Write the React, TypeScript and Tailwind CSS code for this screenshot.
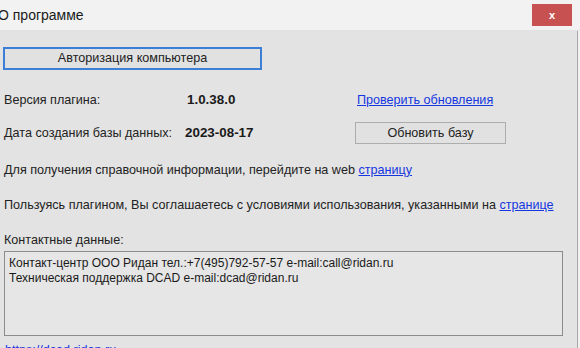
import React from "react";

export default function App() {
  const font = { fontFamily: '"Liberation Sans", Arial, sans-serif' };
  return (
    <div
      className="relative w-[580px] h-[348px] overflow-hidden bg-[#f0f0f0] text-[12.6px] text-[#222]"
      style={font}
    >
      <div className="flex h-[31px] items-start bg-[#f2f2f2] border-b border-[#e0e0e0]">
        <div className="ml-[-2px] mt-[7px] text-[14px] text-[#1a1a1a] leading-[16px]">О программе</div>
        <div className="ml-auto mr-[8px] mt-[4px] flex h-[22px] w-[40px] items-center justify-center bg-[#c75050] text-white text-[11px] font-bold leading-none">
          x
        </div>
      </div>
      <div className="flex h-[317px] w-[578px] flex-col overflow-hidden bg-[#e3e3e3] border-r border-[#a8a8a8] pl-[3px]">
        <button className="mt-[16px] h-[23px] w-[259px] shrink-0 border-2 border-[#3c7fd6] bg-[#e1e1e1] text-[12.6px] text-[#222] leading-none">
          Авторизация компьютера
        </button>
        <div className="mt-[20px] flex h-[20px] shrink-0 items-center">
          <span className="ml-[1px] w-[183px] shrink-0">Версия плагина:</span>
          <span className="w-[170px] shrink-0 text-[13.4px] font-bold text-[#1a1a1a]">1.0.38.0</span>
          <a className="text-[#1537e0] underline">Проверить обновления</a>
        </div>
        <div className="mt-[12px] flex h-[22px] shrink-0 items-center">
          <span className="ml-[1px] w-[181px] shrink-0">Дата создания базы данных:</span>
          <span className="w-[170px] shrink-0 text-[13.4px] font-bold text-[#1a1a1a]">2023-08-17</span>
          <button className="h-[22px] w-[151px] border border-[#adadad] bg-[#e1e1e1] text-[12.6px] text-[#222] leading-none">
            Обновить базу
          </button>
        </div>
        <div className="mt-[16px] flex h-[20px] shrink-0 items-center pl-[1px]">
          Для получения справочной информации, перейдите на web&nbsp;
          <a className="text-[#1537e0] underline">страницу</a>
        </div>
        <div className="mt-[15px] flex h-[20px] shrink-0 items-center pl-[1px]">
          Пользуясь плагином, Вы соглашаетесь с условиями использования, указанными на&nbsp;
          <a className="text-[#1537e0] underline">странице</a>
        </div>
        <div className="mt-[15px] flex h-[20px] shrink-0 items-center pl-[1px]">Контактные данные:</div>
        <div className="mt-[1px] ml-[1px] h-[85px] w-[559px] shrink-0 border border-[#8c8c8c] bg-[#e6e6e6] px-[4px] pt-[4px] text-[12px] leading-[15px] text-[#1a1a1a]">
          <div>Контакт-центр ООО Ридан тел.:+7(495)792-57-57 e-mail:call@ridan.ru</div>
          <div>Техническая поддержка DCAD e-mail:dcad@ridan.ru</div>
        </div>
        <div className="mt-[7px] ml-[2px] shrink-0 text-[#1537e0] leading-[15px]">https://dcad.ridan.ru</div>
      </div>
    </div>
  );
}
